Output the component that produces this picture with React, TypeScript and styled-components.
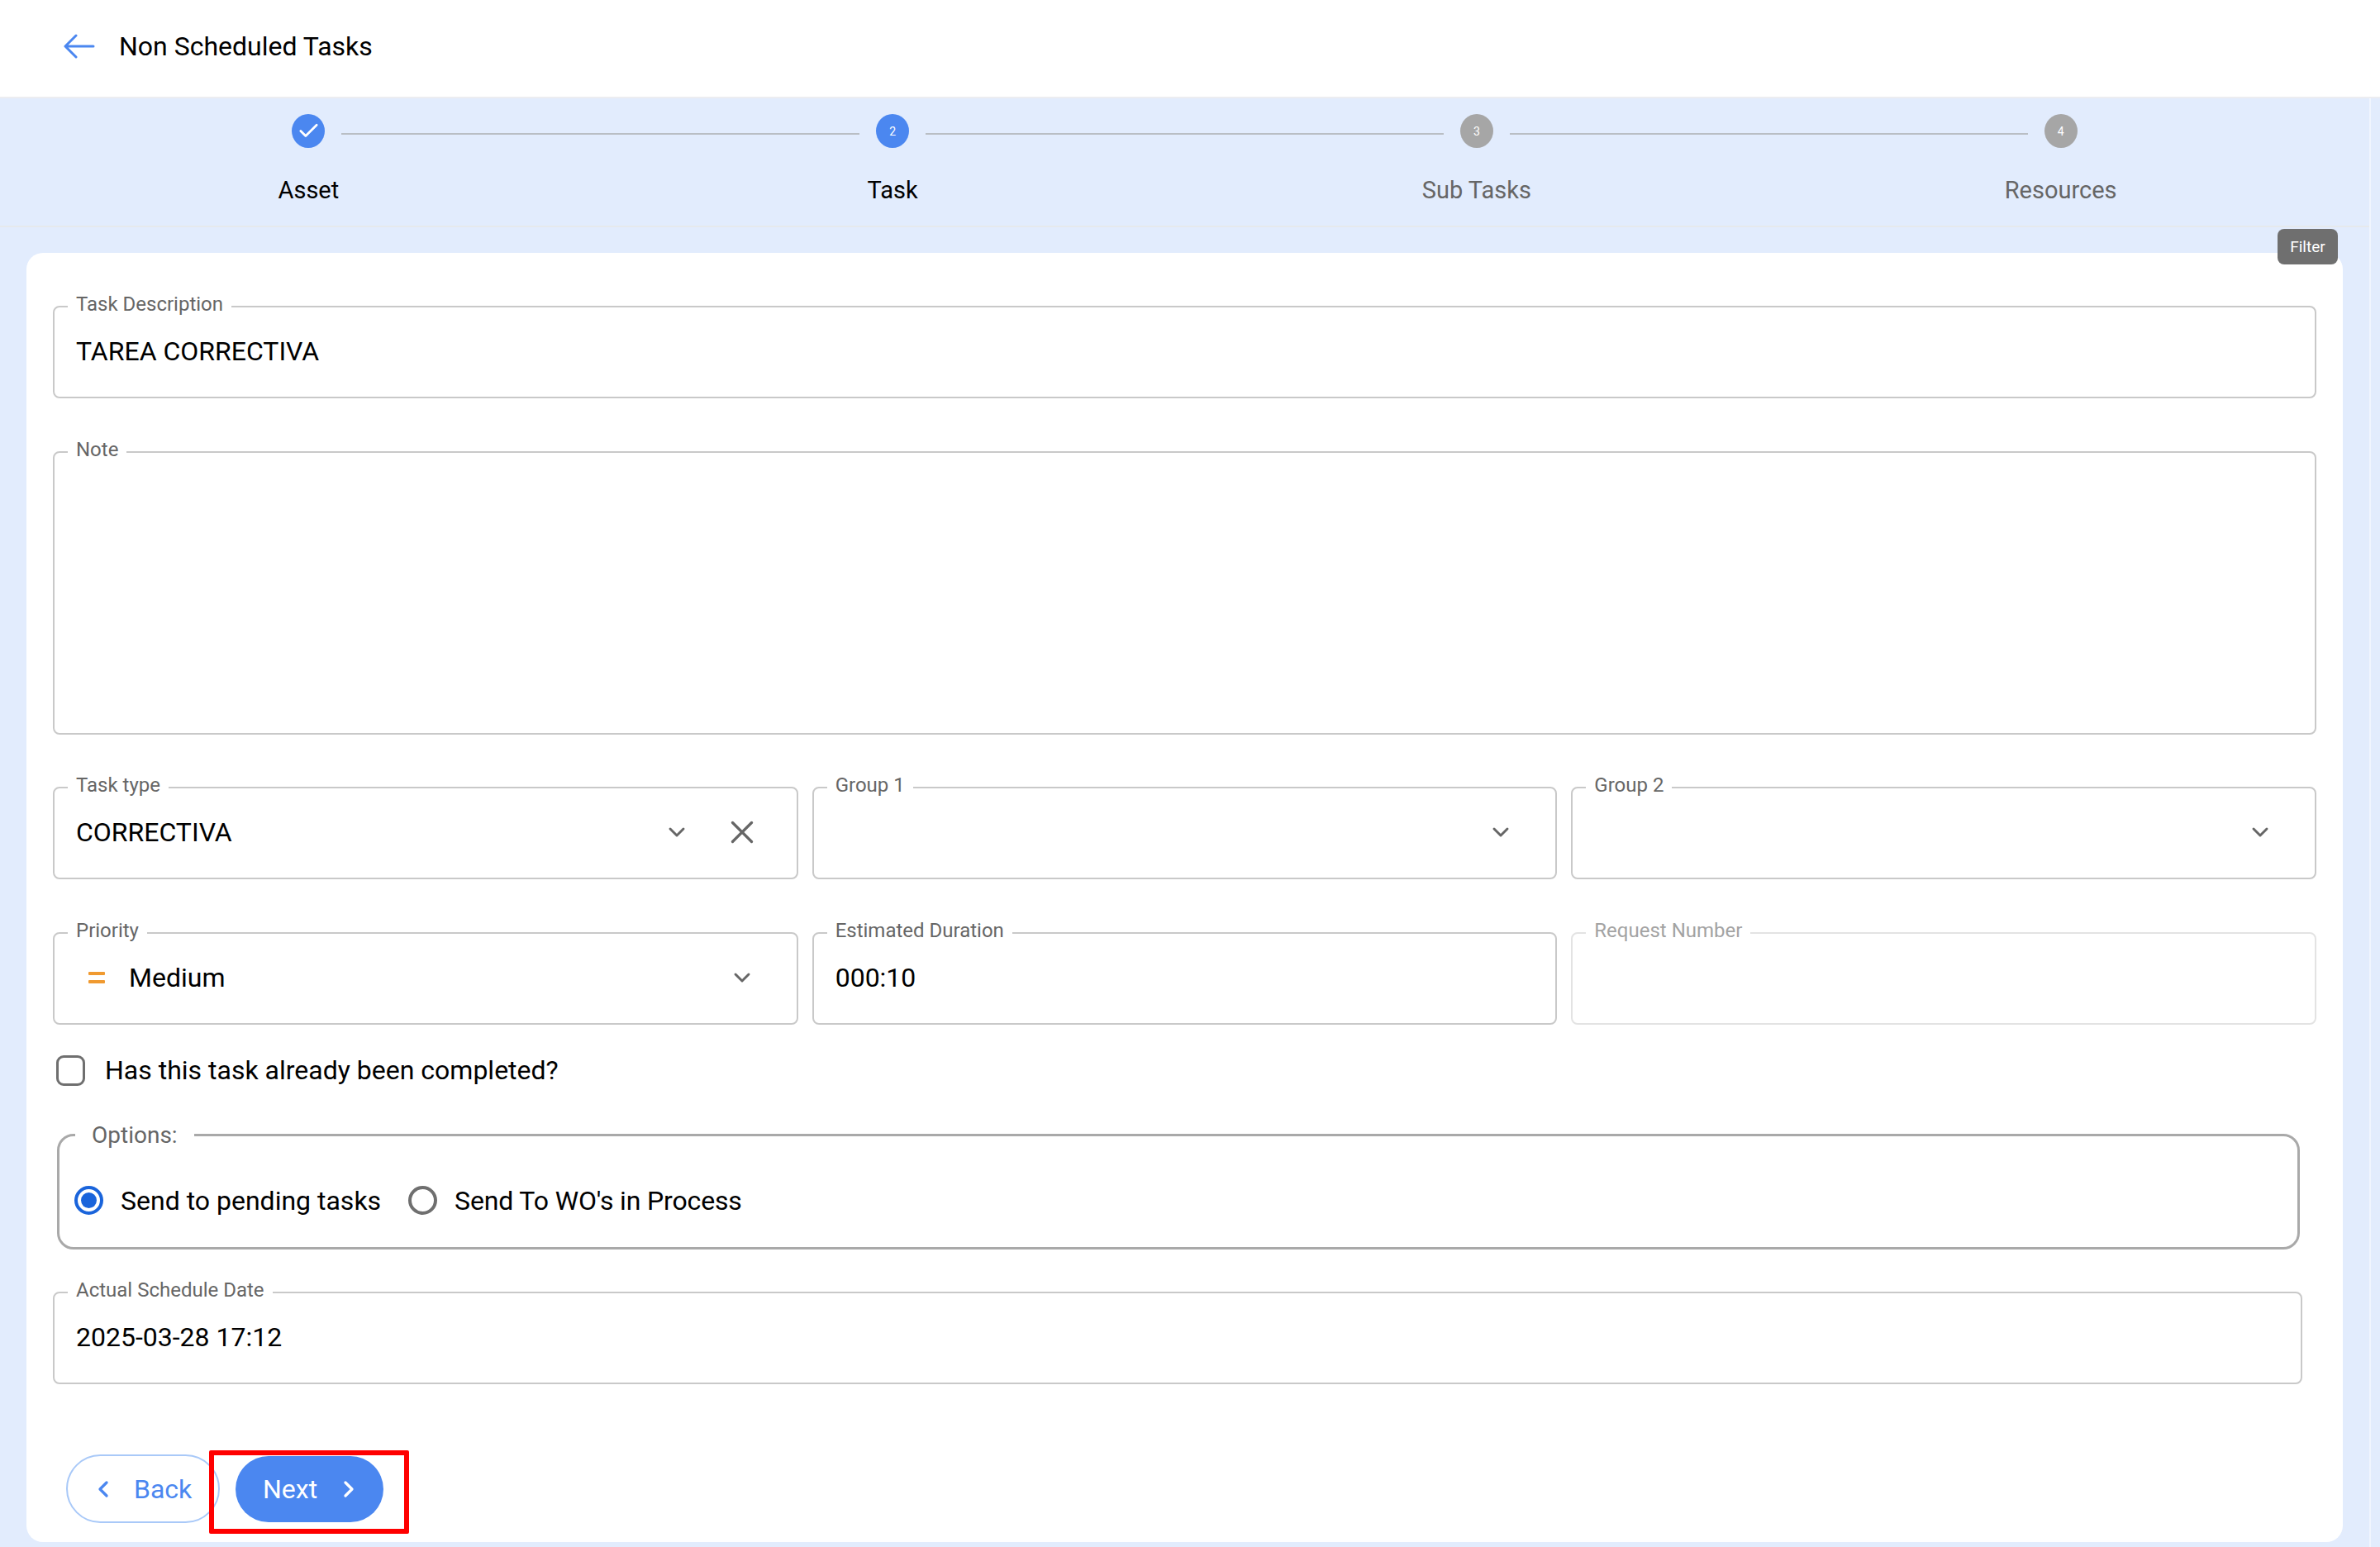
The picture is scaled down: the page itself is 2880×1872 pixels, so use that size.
import styled, { createGlobalStyle } from "styled-components";
import { Check, ChevronDown, ChevronLeft, ChevronRight, X } from "lucide-react";

const GlobalStyle = createGlobalStyle`
  html, body {
    margin: 0;
    height: 100%;
    overflow: hidden;
    background: #e2ecfd;
    font-family: Roboto, "Liberation Sans", sans-serif;
  }
`;

const Page = styled.div`
  display: flex;
  flex-direction: column;
  height: 1872px;
  background: #e2ecfd;
`;

const Header = styled.header`
  display: flex;
  align-items: center;
  gap: 29px;
  box-sizing: border-box;
  height: 119px;
  padding: 0 0 6px 77px;
  background: #fff;
  border-bottom: 2px solid #ecedf1;
`;

const Title = styled.h1`
  margin: 0;
  font-size: 32px;
  font-weight: 400;
  color: #000;
`;

const Body = styled.div`
  display: flex;
  flex: 1;
  min-height: 0;
`;

const Main = styled.main`
  display: flex;
  flex-direction: column;
  flex: 1;
  min-width: 0;
`;

const Rail = styled.div`
  width: 11px;
  border-left: 2px solid #f0f5fe;
`;

const Stepper = styled.nav`
  display: grid;
  grid-template-columns: repeat(4, 1fr);
  box-sizing: border-box;
  height: 156px;
  padding: 19px 20px 0;
  border-bottom: 2px solid #e6e9ec;
`;

const Step = styled.div`
  display: flex;
  flex-direction: column;
  align-items: stretch;
`;

const Track = styled.div`
  display: flex;
  align-items: flex-start;
`;

const Connector = styled.span<{ $off?: boolean; $side: "left" | "right" }>`
  flex: 1;
  height: 2px;
  margin-top: 23px;
  margin-left: ${({ $side }) => ($side === "right" ? "20px" : "0")};
  margin-right: ${({ $side }) => ($side === "left" ? "20px" : "0")};
  background: ${({ $off }) => ($off ? "transparent" : "#b9bec4")};
`;

const Bubble = styled.span<{ $active: boolean }>`
  display: flex;
  align-items: center;
  justify-content: center;
  flex: none;
  width: 40px;
  height: 41px;
  border-radius: 50%;
  font-size: 14px;
  color: #fff;
  background: ${({ $active }) => ($active ? "#4b87f0" : "#a6a6a6")};
`;

const StepLabel = styled.span<{ $active: boolean }>`
  margin-top: 31px;
  text-align: center;
  font-size: 29px;
  line-height: 40px;
  color: ${({ $active }) => ($active ? "#000" : "#666")};
`;

const Card = styled.section`
  position: relative;
  flex: 1;
  margin: 31px 32px 6px;
  padding: 53px 32px 0;
  background: #fff;
  border-radius: 20px;
`;

const FilterTag = styled.span`
  position: absolute;
  top: -29px;
  right: 6px;
  display: flex;
  align-items: center;
  justify-content: center;
  width: 73px;
  height: 43px;
  border-radius: 8px;
  font-size: 19px;
  color: #fff;
  background: #6f6f6f;
`;

const Field = styled.fieldset<{ $mt?: number; $disabled?: boolean; $w?: number }>`
  box-sizing: border-box;
  min-width: 0;
  width: ${({ $w }) => ($w ? `${$w}px` : "auto")};
  margin: ${({ $mt }) => $mt ?? 0}px 0 0;
  padding: 0;
  border: 2px solid ${({ $disabled }) => ($disabled ? "#e3e3e3" : "#c9c9c9")};
  border-radius: 8px;
`;

const FieldLabel = styled.legend<{ $disabled?: boolean }>`
  position: relative;
  top: -3px;
  margin-left: 16px;
  padding: 0 10px;
  font-size: 24px;
  line-height: 24px;
  color: ${({ $disabled }) => ($disabled ? "#a3a3a3" : "#666")};
`;

const FieldBody = styled.div<{ $h?: number }>`
  display: flex;
  align-items: center;
  box-sizing: border-box;
  height: ${({ $h }) => $h ?? 97}px;
  padding: 0 0 14px 26px;
  font-size: 32px;
  color: #000;
`;

const FieldValue = styled.span`
  flex: 1;
`;

const SelectIcons = styled.span`
  display: flex;
  align-items: center;
  padding-right: 50px;
  color: #666;
`;

const ClearIcon = styled(X)`
  margin: 0 -7px 0 40px;
`;

const ThreeCols = styled.div<{ $mt: number }>`
  display: grid;
  grid-template-columns: repeat(3, 1fr);
  gap: 17px;
  margin-top: ${({ $mt }) => $mt}px;
`;

const PriorityMark = styled.svg`
  flex: none;
  margin: 0 29px 0 15px;
`;

const CheckRow = styled.label`
  display: flex;
  align-items: center;
  gap: 24px;
  margin: 36px 0 0 4px;
  font-size: 32px;
  line-height: 38px;
  color: #000;
`;

const CheckBox = styled.span`
  box-sizing: border-box;
  flex: none;
  width: 35px;
  height: 37px;
  border: 3px solid #6f6f6f;
  border-radius: 9px;
`;

const OptionsBox = styled.fieldset`
  box-sizing: border-box;
  width: 2714px;
  min-width: 0;
  margin: 44px 0 0 5px;
  padding: 0;
  border: 3px solid #a9a9a9;
  border-radius: 20px;
`;

const OptionsLabel = styled.legend`
  position: relative;
  top: 1px;
  margin-left: 19px;
  padding: 0 20px;
  font-size: 28px;
  line-height: 30px;
  color: #666;
`;

const RadioRow = styled.div`
  display: flex;
  align-items: center;
  box-sizing: border-box;
  height: 121px;
  padding: 8px 0 0 18px;
`;

const RadioOption = styled.label<{ $tight?: boolean }>`
  display: flex;
  align-items: center;
  gap: 21px;
  margin-right: 33px;
  font-size: 32px;
  letter-spacing: ${({ $tight }) => ($tight ? "-0.15px" : "0")};
  color: #000;
`;

const RadioMark = styled.span<{ $on?: boolean }>`
  box-sizing: border-box;
  display: flex;
  align-items: center;
  justify-content: center;
  flex: none;
  width: 35px;
  height: 35px;
  border-radius: 50%;
  border: 4px solid ${({ $on }) => ($on ? "#1a64db" : "#6f6f6f")};

  &::after {
    content: "";
    display: ${({ $on }) => ($on ? "block" : "none")};
    width: 19px;
    height: 19px;
    border-radius: 50%;
    background: #1a64db;
  }
`;

const Actions = styled.div`
  display: flex;
  align-items: center;
  gap: 19px;
  margin: 85px 0 0 16px;
`;

const BackButton = styled.button`
  display: flex;
  align-items: center;
  gap: 21px;
  box-sizing: border-box;
  width: 186px;
  height: 83px;
  padding: 0 0 0 27px;
  border: 2px solid #a9c9f8;
  border-radius: 42px;
  background: #fff;
  font: inherit;
  font-size: 32px;
  color: #4b87f0;
`;

const NextWrap = styled.div`
  position: relative;
`;

const NextButton = styled.button`
  display: flex;
  align-items: center;
  gap: 22px;
  box-sizing: border-box;
  width: 179px;
  height: 80px;
  padding: 0 0 0 33px;
  border: none;
  border-radius: 40px;
  background: #4b87f0;
  font: inherit;
  font-size: 32px;
  color: #fff;
`;

const Highlight = styled.span`
  position: absolute;
  inset: -7px -31px -14px -32px;
  border: 6px solid #ff0000;
  border-radius: 2px;
  pointer-events: none;
`;

const steps = ["Asset", "Task", "Sub Tasks", "Resources"];

export default function App() {
  return (
    <Page>
      <GlobalStyle />
      <Header>
        <svg
          width="38"
          height="30"
          viewBox="0 0 38 30"
          fill="none"
          stroke="#4b87f0"
          strokeWidth="3"
          strokeLinecap="round"
          strokeLinejoin="round"
        >
          <path d="M2 15H36M15 2L2 15L15 28" />
        </svg>
        <Title>Non Scheduled Tasks</Title>
      </Header>
      <Body>
        <Main>
          <Stepper>
            {steps.map((label, i) => (
              <Step key={label}>
                <Track>
                  <Connector $side="left" $off={i === 0} />
                  <Bubble $active={i < 2}>
                    {i === 0 ? <Check size={29} strokeWidth={2.3} /> : i + 1}
                  </Bubble>
                  <Connector $side="right" $off={i === steps.length - 1} />
                </Track>
                <StepLabel $active={i < 2}>{label}</StepLabel>
              </Step>
            ))}
          </Stepper>
          <Card>
            <FilterTag>Filter</FilterTag>
            <Field>
              <FieldLabel>Task Description</FieldLabel>
              <FieldBody>
                <FieldValue>TAREA CORRECTIVA</FieldValue>
              </FieldBody>
            </Field>
            <Field $mt={53}>
              <FieldLabel>Note</FieldLabel>
              <FieldBody $h={328} />
            </Field>
            <ThreeCols $mt={52}>
              <Field>
                <FieldLabel>Task type</FieldLabel>
                <FieldBody>
                  <FieldValue>CORRECTIVA</FieldValue>
                  <SelectIcons>
                    <ChevronDown size={32} strokeWidth={2.2} />
                    <ClearIcon size={46} strokeWidth={1.7} />
                  </SelectIcons>
                </FieldBody>
              </Field>
              <Field>
                <FieldLabel>Group 1</FieldLabel>
                <FieldBody>
                  <FieldValue />
                  <SelectIcons>
                    <ChevronDown size={32} strokeWidth={2.2} />
                  </SelectIcons>
                </FieldBody>
              </Field>
              <Field>
                <FieldLabel>Group 2</FieldLabel>
                <FieldBody>
                  <FieldValue />
                  <SelectIcons>
                    <ChevronDown size={32} strokeWidth={2.2} />
                  </SelectIcons>
                </FieldBody>
              </Field>
            </ThreeCols>
            <ThreeCols $mt={53}>
              <Field>
                <FieldLabel>Priority</FieldLabel>
                <FieldBody>
                  <PriorityMark width="20" height="14" viewBox="0 0 20 14" aria-hidden="true">
                    <rect width="20" height="4" rx="1" fill="#f09a30" />
                    <rect y="10" width="20" height="4" rx="1" fill="#f09a30" />
                  </PriorityMark>
                  <FieldValue>Medium</FieldValue>
                  <SelectIcons>
                    <ChevronDown size={32} strokeWidth={2.2} />
                  </SelectIcons>
                </FieldBody>
              </Field>
              <Field>
                <FieldLabel>Estimated Duration</FieldLabel>
                <FieldBody>
                  <FieldValue>000:10</FieldValue>
                </FieldBody>
              </Field>
              <Field $disabled>
                <FieldLabel $disabled>Request Number</FieldLabel>
                <FieldBody />
              </Field>
            </ThreeCols>
            <CheckRow>
              <CheckBox />
              Has this task already been completed?
            </CheckRow>
            <OptionsBox>
              <OptionsLabel>Options:</OptionsLabel>
              <RadioRow>
                <RadioOption>
                  <RadioMark $on />
                  Send to pending tasks
                </RadioOption>
                <RadioOption $tight>
                  <RadioMark />
                  Send To WO's in Process
                </RadioOption>
              </RadioRow>
            </OptionsBox>
            <Field $mt={40} $w={2722}>
              <FieldLabel>Actual Schedule Date</FieldLabel>
              <FieldBody>
                <FieldValue>2025-03-28 17:12</FieldValue>
              </FieldBody>
            </Field>
            <Actions>
              <BackButton>
                <ChevronLeft size={32} strokeWidth={2.5} />
                Back
              </BackButton>
              <NextWrap>
                <NextButton>
                  Next
                  <ChevronRight size={32} strokeWidth={2.5} />
                </NextButton>
                <Highlight />
              </NextWrap>
            </Actions>
          </Card>
        </Main>
        <Rail />
      </Body>
    </Page>
  );
}
